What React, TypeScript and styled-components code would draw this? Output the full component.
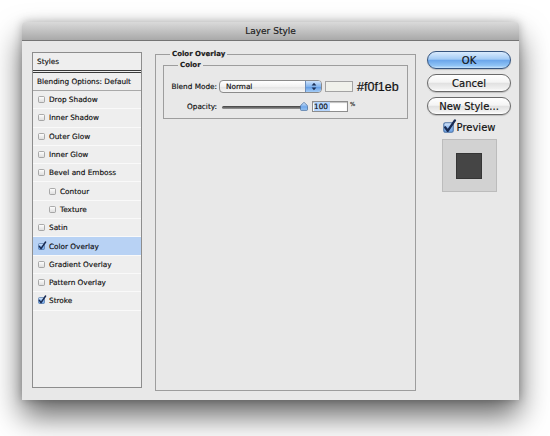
import React from 'react'
import styled, { createGlobalStyle } from 'styled-components'

const GlobalStyle = createGlobalStyle`
  html, body {
    margin: 0;
    background: #ffffff;
  }
  body {
    font-family: 'DejaVu Sans', 'Liberation Sans', sans-serif;
    color: #0e0e0e;
    -webkit-text-stroke: 0.15px #0e0e0e;
  }
`

const Page = styled.div`
  width: 550px;
  height: 436px;
  box-sizing: border-box;
  padding: 22px 0 0 22px;
  overflow: hidden;
`

const Window = styled.div`
  width: 497px;
  height: 378px;
  display: flex;
  flex-direction: column;
  background: #e8e8e8;
  border-radius: 4px 4px 0 0;
  box-shadow:
    0 16px 30px rgba(0, 0, 0, 0.6),
    0 0 10px rgba(0, 0, 0, 0.25);
`

const TitleBar = styled.div`
  height: 18px;
  line-height: 18px;
  text-align: center;
  font-size: 9px;
  color: #1d1d1d;
  border-radius: 4px 4px 0 0;
  border-bottom: 1px solid #747474;
  background: linear-gradient(#dadada, #a9a9a9);
`

const Body = styled.div`
  flex: 1;
  display: flex;
  align-items: flex-start;
  padding: 11px 8px 0 10px;
`

/* ---------- styles list ---------- */

const StyleList = styled.div`
  width: 110px;
  height: 336px;
  box-sizing: border-box;
  border: 1px solid #8d8d8d;
  background: #eeeeee;
  display: flex;
  flex-direction: column;
`

const ListHeader = styled.div<{ $rule: string }>`
  height: 17px;
  display: flex;
  align-items: center;
  padding-left: 4px;
  font-size: 7.3px;
  border-bottom: ${(p) => p.$rule};
`

const ListItem = styled.div<{ $selected?: boolean; $indent?: boolean }>`
  height: 17.3px;
  display: flex;
  align-items: center;
  gap: 4px;
  padding-left: ${(p) => (p.$indent ? 16 : 5)}px;
  font-size: 7.3px;
  background: ${(p) => (p.$selected ? '#b8d2f4' : 'transparent')};
  border-bottom: 1px solid #f9f9f9;
`

type CheckProps = { checked?: boolean; size: number }

const Check = ({ checked, size }: CheckProps) => (
  <svg
    width={size}
    height={size}
    viewBox="0 0 7 7"
    style={{ overflow: 'visible', flexShrink: 0 }}
  >
    <defs>
      <linearGradient id="cbOff" x1="0" y1="0" x2="0" y2="1">
        <stop offset="0" stopColor="#ffffff" />
        <stop offset="1" stopColor="#dcdcdc" />
      </linearGradient>
      <linearGradient id="cbOn" x1="0" y1="0" x2="0" y2="1">
        <stop offset="0" stopColor="#dbe9fb" />
        <stop offset="0.5" stopColor="#8fbaf0" />
        <stop offset="1" stopColor="#6ba3e6" />
      </linearGradient>
    </defs>
    <rect
      x="0.5"
      y="0.5"
      width="6"
      height="6"
      rx="1"
      fill={checked ? 'url(#cbOn)' : 'url(#cbOff)'}
      stroke={checked ? '#4f74a6' : '#8a8a8a'}
      strokeWidth="0.7"
    />
    {checked && (
      <path
        d="M1.4 3.4 L3 5.6 L7.6 -1"
        fill="none"
        stroke="#182a52"
        strokeWidth="1.5"
        strokeLinecap="round"
        strokeLinejoin="round"
      />
    )}
  </svg>
)

const effects = [
  { label: 'Drop Shadow' },
  { label: 'Inner Shadow' },
  { label: 'Outer Glow' },
  { label: 'Inner Glow' },
  { label: 'Bevel and Emboss' },
  { label: 'Contour', indent: true },
  { label: 'Texture', indent: true },
  { label: 'Satin' },
  { label: 'Color Overlay', checked: true, selected: true },
  { label: 'Gradient Overlay' },
  { label: 'Pattern Overlay' },
  { label: 'Stroke', checked: true },
]

/* ---------- settings ---------- */

const Group = styled.fieldset<{ $outer?: boolean }>`
  margin: ${(p) => (p.$outer ? '-2px 0 0 13px' : '2px 0 0')};
  padding: ${(p) => (p.$outer ? '0 7px' : '10px 3px 6px')};
  width: ${(p) => (p.$outer ? '261px' : 'auto')};
  height: ${(p) => (p.$outer ? '341px' : 'auto')};
  box-sizing: border-box;
  min-width: 0;
  border: 1px solid #9d9d9d;
`

const GroupTitle = styled.legend<{ $inset: number }>`
  margin-left: ${(p) => p.$inset}px;
  padding: 0 2px;
  font-size: 7px;
  line-height: 9px;
  font-weight: bold;
  color: #1a1a1a;
`

const Field = styled.div<{ $height: number }>`
  height: ${(p) => p.$height}px;
  display: flex;
  align-items: center;
  & + & {
    margin-top: 8px;
  }
`

const FieldLabel = styled.span<{ $gap: number }>`
  width: 50px;
  margin-right: ${(p) => p.$gap}px;
  text-align: right;
  font-size: 7.3px;
  white-space: nowrap;
`

const Select = styled.div`
  width: 103px;
  height: 13px;
  box-sizing: border-box;
  display: flex;
  align-items: stretch;
  border: 1px solid #8b8b8b;
  border-radius: 4px;
  overflow: hidden;
  background: linear-gradient(#ffffff, #f1f1f1 50%, #e2e2e2 52%, #f6f6f6);
  font-size: 7.3px;
`

const SelectValue = styled.span`
  flex: 1;
  display: flex;
  align-items: center;
  padding-left: 6px;
`

const SelectCap = styled.span`
  width: 15px;
  display: flex;
  align-items: center;
  justify-content: center;
  border-left: 1px solid #6c8dbb;
  background: linear-gradient(#cfe3fb, #84b5ee 50%, #5c98e3 52%, #a6cdf6);
`

const Swatch = styled.div<{ $color: string }>`
  width: 28px;
  height: 11px;
  margin-left: 3px;
  box-sizing: border-box;
  border: 1px solid #a3a3a3;
  background: ${(p) => p.$color};
`

const HexValue = styled.span`
  margin-left: 4px;
  font-family: 'Liberation Sans', Arial, sans-serif;
  font-size: 12.5px;
  color: #111111;
  -webkit-text-stroke: 0.2px #111111;
`

const Slider = styled.div`
  width: 88px;
  display: flex;
  align-items: center;
`

const Track = styled.div`
  flex: 1;
  height: 3px;
  margin-left: 2px;
  margin-top: 2px;
  border-radius: 2px;
  background: linear-gradient(#3e3e3e, #9a9a9a);
`

const Knob = () => (
  <svg width="8" height="9" viewBox="0 0 8 9" style={{ marginLeft: -2 }}>
    <defs>
      <linearGradient id="knob" x1="0" y1="0" x2="0" y2="1">
        <stop offset="0" stopColor="#d6e8fc" />
        <stop offset="0.55" stopColor="#6fa7ea" />
        <stop offset="1" stopColor="#9cc8f5" />
      </linearGradient>
    </defs>
    <path
      d="M4 0.6 Q4.6 0.6 5.2 1.3 L7.3 3.6 Q7.5 3.9 7.5 4.4 V7.6 Q7.5 8.4 6.7 8.4 H1.3 Q0.5 8.4 0.5 7.6 V4.4 Q0.5 3.9 0.7 3.6 L2.8 1.3 Q3.4 0.6 4 0.6 Z"
      fill="url(#knob)"
      stroke="#3f6597"
      strokeWidth="0.7"
    />
  </svg>
)

const NumberInput = styled.div`
  width: 36px;
  height: 11px;
  margin-left: 4px;
  box-sizing: border-box;
  padding: 0 1px;
  display: flex;
  align-items: center;
  border: 1px solid #8d8d8d;
  box-shadow: inset 0 1px 1px rgba(0, 0, 0, 0.25);
  background: #ffffff;
  font-size: 7.3px;
`

const Selection = styled.span`
  background: #b5d5fd;
  padding-right: 2px;
`

const Unit = styled.span`
  align-self: flex-start;
  margin-left: 2px;
  font-size: 5.5px;
`

/* ---------- actions ---------- */

const Actions = styled.div`
  width: 84px;
  margin: -1px 0 0 11px;
  display: flex;
  flex-direction: column;
  align-items: center;
  gap: 5px;
`

const Button = styled.div<{ $primary?: boolean }>`
  width: 84px;
  height: 18px;
  box-sizing: border-box;
  display: flex;
  align-items: center;
  justify-content: center;
  border-radius: 9px;
  font-size: 10px;
  color: #111111;
  border: 1px solid ${(p) => (p.$primary ? '#36557f' : '#6a6a6a')};
  background: ${(p) =>
    p.$primary
      ? 'linear-gradient(#d9ebfd, #a3cbf5 45%, #6ba6eb 52%, #8fc3f5 85%, #c8e4fd)'
      : 'linear-gradient(#ffffff, #f4f4f4 45%, #e1e1e1 52%, #f0f0f0 85%, #ffffff)'};
  box-shadow: 0 1px 1px rgba(0, 0, 0, 0.18);
`

const PreviewToggle = styled.div`
  margin-top: 2px;
  display: flex;
  align-items: center;
  gap: 3px;
  font-size: 10px;
`

const PreviewBox = styled.div`
  width: 55px;
  height: 53px;
  margin-top: 1px;
  box-sizing: border-box;
  display: flex;
  align-items: center;
  justify-content: center;
  border: 1px solid #bcbcbc;
  background: #d2d2d2;
`

const PreviewSwatch = styled.div`
  width: 26px;
  height: 26px;
  box-sizing: border-box;
  border: 1px solid #353535;
  background: #454545;
`

const UpDown = () => (
  <svg width="6" height="9" viewBox="0 0 6 9">
    <path d="M3 0.8 L5.4 3.6 H0.6 Z M3 8.2 L5.4 5.4 H0.6 Z" fill="#1b2f55" />
  </svg>
)

export default function App() {
  return (
    <>
      <GlobalStyle />
      <Page>
        <Window>
          <TitleBar>Layer Style</TitleBar>
          <Body>
            <StyleList>
              <ListHeader $rule="3px double #3a3a3a">Styles</ListHeader>
              <ListHeader $rule="1px solid #a9a9a9">
                Blending Options: Default
              </ListHeader>
              {effects.map((effect) => (
                <ListItem
                  key={effect.label}
                  $selected={effect.selected}
                  $indent={effect.indent}
                >
                  <Check checked={effect.checked} size={7} />
                  {effect.label}
                </ListItem>
              ))}
            </StyleList>

            <Group $outer>
              <GroupTitle $inset={7}>Color Overlay</GroupTitle>
              <Group>
                <GroupTitle $inset={11}>Color</GroupTitle>
                <Field $height={13}>
                  <FieldLabel $gap={2}>Blend Mode:</FieldLabel>
                  <Select>
                    <SelectValue>Normal</SelectValue>
                    <SelectCap>
                      <UpDown />
                    </SelectCap>
                  </Select>
                  <Swatch $color="#f0f1eb" />
                  <HexValue>#f0f1eb</HexValue>
                </Field>
                <Field $height={11}>
                  <FieldLabel $gap={3}>Opacity:</FieldLabel>
                  <Slider>
                    <Track />
                    <Knob />
                  </Slider>
                  <NumberInput>
                    <Selection>100</Selection>
                  </NumberInput>
                  <Unit>%</Unit>
                </Field>
              </Group>
            </Group>

            <Actions>
              <Button $primary>OK</Button>
              <Button>Cancel</Button>
              <Button>New Style...</Button>
              <PreviewToggle>
                <Check checked size={11} />
                Preview
              </PreviewToggle>
              <PreviewBox>
                <PreviewSwatch />
              </PreviewBox>
            </Actions>
          </Body>
        </Window>
      </Page>
    </>
  )
}
